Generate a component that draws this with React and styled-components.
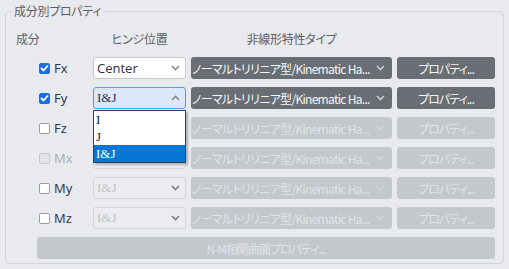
import React from "react"
import styled, { createGlobalStyle } from "styled-components"

const GlobalStyle = createGlobalStyle`
  body {
    margin: 0;
    background: #e9eaee;
    font-family: "Open Sans", "Noto Sans CJK JP", sans-serif;
  }
`

const Panel = styled.fieldset`
  margin: 3px 5px 0;
  padding: 0 5px 4px 6px;
  border: 1px solid #d3d4d9;
  border-radius: 4px;
  min-width: 0;
`

const Legend = styled.legend`
  padding: 0 2px;
  font-family: "Noto Sans CJK JP", sans-serif;
  font-feature-settings: "palt";
  font-size: 12px;
  line-height: 16px;
  letter-spacing: -0.3px;
  color: #5c5d66;
`

const Grid = styled.div`
  display: grid;
  grid-template-columns: 72px 93px 201px 98px;
  grid-template-rows: 21px repeat(7, 22px);
  column-gap: 5px;
  row-gap: 8px;
  margin: 9px 0 0 4px;
`

const Head = styled.div`
  font-family: "Noto Sans CJK JP", sans-serif;
  font-feature-settings: "palt";
  font-size: 12px;
  line-height: 21px;
  letter-spacing: -0.3px;
  color: #5c5d66;
  text-align: ${(p) => p.$align || "left"};
`

const CheckCell = styled.label`
  display: flex;
  align-items: center;
  gap: 4px;
  padding-left: 23px;
  font-size: 13px;
  color: ${(p) => (p.$disabled ? "#a9abb2" : "#2d2f45")};
`

const Box = styled.span`
  width: 11px;
  height: 11px;
  border-radius: 2px;
  box-sizing: border-box;
  display: flex;
  align-items: center;
  justify-content: center;
  background: ${(p) => (p.$checked ? "#1b6fdc" : p.$disabled ? "#e3e4e8" : "#fff")};
  border: 1px solid ${(p) => (p.$checked ? "#1b6fdc" : p.$disabled ? "#c8c9ce" : "#9a9ba2")};
`

const SelectWrap = styled.div`
  position: relative;
`

const Hinge = styled.div`
  height: 100%;
  box-sizing: border-box;
  display: flex;
  align-items: center;
  justify-content: space-between;
  padding: 0 5px 0 3px;
  border-radius: 3px;
  border: 1px solid ${(p) => (p.$focus ? "#3aa7df" : p.$disabled ? "#d3d4d8" : "#c9cacf")};
  background: ${(p) => (p.$focus ? "#dce8f7" : p.$disabled ? "#ebecf0" : "#fff")};
  color: ${(p) => (p.$disabled ? "#c3c4c9" : "#2d2f45")};
  font-family: ${(p) => (p.$serif ? '"Liberation Serif", serif' : '"Open Sans", sans-serif')};
  font-size: 13px;
`

const List = styled.ul`
  position: absolute;
  top: calc(100% + 1px);
  left: 0;
  width: 100%;
  box-sizing: border-box;
  margin: 0;
  padding: 0;
  list-style: none;
  background: #fff;
  border: 1px solid #3d3e44;
  box-shadow: 2px 2px 2px rgba(0, 0, 0, 0.25);
  z-index: 2;
`

const Item = styled.li`
  height: 17px;
  line-height: 17px;
  padding-left: 2px;
  font-family: "Liberation Serif", serif;
  font-size: 13px;
  color: ${(p) => (p.$active ? "#fff" : "#1b1b30")};
  background: ${(p) => (p.$active ? "#0a76d3" : "transparent")};
`

const TypeSelect = styled.div`
  display: flex;
  align-items: center;
  gap: 5px;
  padding: 0 7px 0 1px;
  border-radius: 3px;
  background: ${(p) => (p.$disabled ? "#c3c8cd" : "#696e75")};
  color: ${(p) => (p.$disabled ? "#e1e4e7" : "#f6f7f8")};
  font-family: "Noto Sans CJK JP", sans-serif;
  font-feature-settings: "palt";
  font-size: 12px;
  letter-spacing: -0.7px;
  white-space: nowrap;
  overflow: hidden;
`

const TypeText = styled.span`
  flex: 1;
  min-width: 0;
  overflow: hidden;
`

const Button = styled.button`
  border: none;
  border-radius: 3px;
  padding: 0;
  background: ${(p) => (p.$disabled ? "#c3c8cd" : "#696e75")};
  color: ${(p) => (p.$disabled ? "#e1e4e7" : "#f6f7f8")};
  font-family: "Noto Sans CJK JP", sans-serif;
  font-feature-settings: "palt";
  font-size: 12px;
  letter-spacing: -1px;
`

const WideButton = styled(Button)`
  grid-column: 1 / -1;
  margin-left: 21px;
`

const Chevron = ({ up, color }) => (
  <svg width="9" height="6" viewBox="0 0 9 6">
    <polyline
      points={up ? "1,5 4.5,1.5 8,5" : "1,1 4.5,4.5 8,1"}
      fill="none"
      stroke={color}
      strokeWidth="1.6"
    />
  </svg>
)

const Check = () => (
  <svg width="9" height="8" viewBox="0 0 9 8">
    <polyline points="1,4 3.5,6.5 8,1.5" fill="none" stroke="#fff" strokeWidth="1.8" />
  </svg>
)

const rows = [
  { name: "Fx", checked: true, hinge: "Center", active: true },
  { name: "Fy", checked: true, hinge: "I&J", active: true, open: true },
  { name: "Fz" },
  { name: "Mx", boxDisabled: true },
  { name: "My" },
  { name: "Mz" },
]

const Row = ({ row }) => {
  const off = !row.active
  return (
    <>
      <CheckCell $disabled={row.boxDisabled}>
        <Box $checked={row.checked} $disabled={row.boxDisabled}>
          {row.checked && <Check />}
        </Box>
        {row.name}
      </CheckCell>
      <SelectWrap>
        <Hinge $focus={row.open} $disabled={off} $serif={row.hinge !== "Center"}>
          {row.name === "Fz" ? "" : row.hinge || "I&J"}
          <Chevron up={row.open} color={off ? "#7b7d85" : "#8a8b92"} />
        </Hinge>
        {row.open && (
          <List>
            <Item>I</Item>
            <Item>J</Item>
            <Item $active>I&amp;J</Item>
          </List>
        )}
      </SelectWrap>
      <TypeSelect $disabled={off}>
        <TypeText>ノーマルトリリニア型/Kinematic Ha...</TypeText>
        <Chevron color={off ? "#d3d7db" : "#c9ccd0"} />
      </TypeSelect>
      <Button $disabled={off}>プロパティ...</Button>
    </>
  )
}

export default function App() {
  return (
    <>
      <GlobalStyle />
      <Panel>
        <Legend>成分別プロパティ</Legend>
        <Grid>
          <Head>成分</Head>
          <Head $align="center">ヒンジ位置</Head>
          <Head $align="center">非線形特性タイプ</Head>
          <div />
          {rows.map((row) => (
            <Row key={row.name} row={row} />
          ))}
          <WideButton $disabled>N-M相関曲面プロパティ...</WideButton>
        </Grid>
      </Panel>
    </>
  )
}
